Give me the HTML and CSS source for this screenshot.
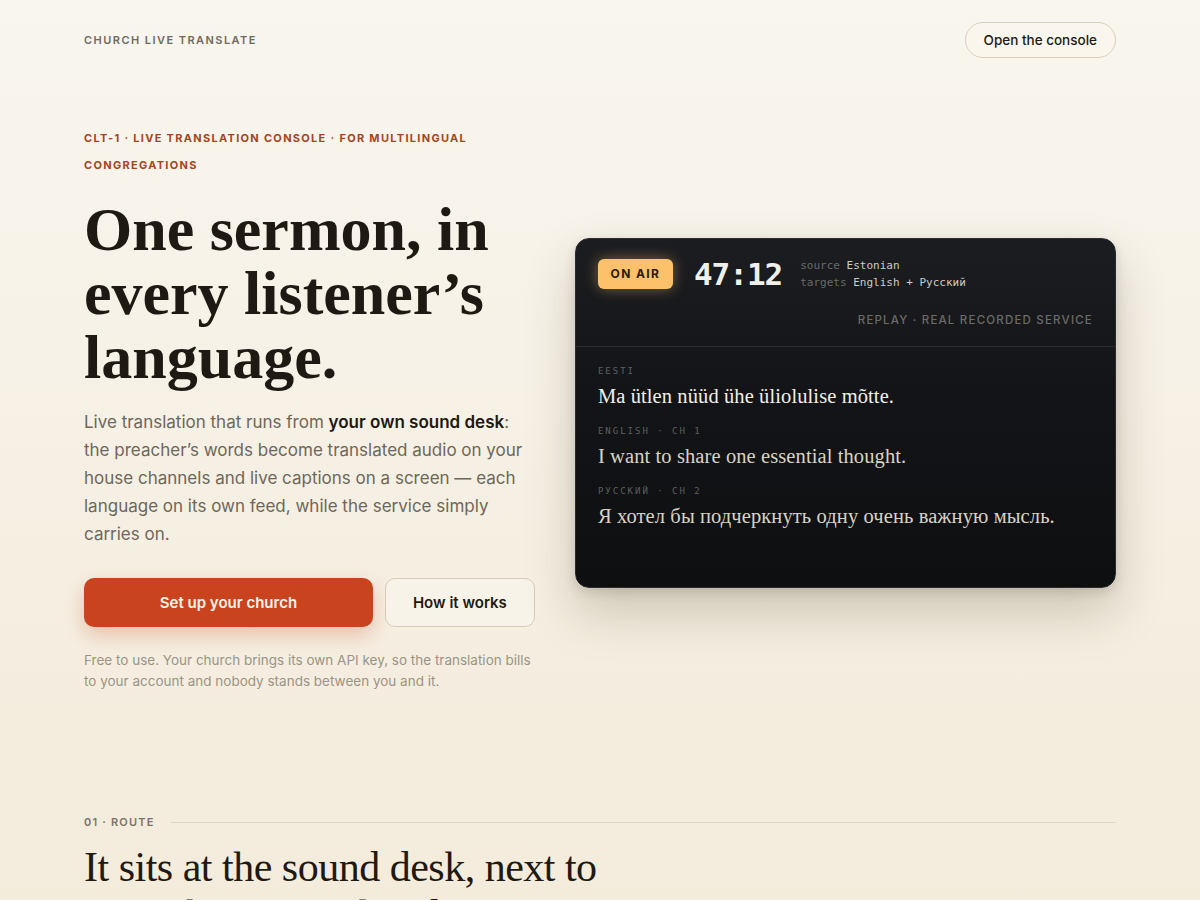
FILE: index.html
```html
<!DOCTYPE html>
<html lang="en">
<head>
<meta charset="utf-8">
<title>Church Live Translate</title>
<link rel="stylesheet" href="styles.css">
</head>
<body>
<div class="page">
  <header class="topbar">
    <div class="brand">CHURCH LIVE TRANSLATE</div>
    <a class="console-btn" href="#">Open the console</a>
  </header>

  <section class="hero">
    <div class="hero-copy">
      <p class="eyebrow">CLT-1 · LIVE TRANSLATION CONSOLE · FOR MULTILINGUAL CONGREGATIONS</p>
      <h1 class="headline">One sermon, in every listener’s language.</h1>
      <p class="lede">Live translation that runs from <strong>your own sound desk</strong>: the preacher’s words become translated audio on your house channels and live captions on a screen — each language on its own feed, while the service simply carries on.</p>
      <div class="actions">
        <a class="btn btn-primary" href="#">Set up your church</a>
        <a class="btn btn-ghost" href="#">How it works</a>
      </div>
      <p class="note">Free to use. Your church brings its own API key, so the translation bills to your account and nobody stands between you and it.</p>
    </div>

    <div class="console">
      <div class="console-head">
        <div class="console-row">
          <span class="onair">ON AIR</span>
          <span class="timer">47:12</span>
          <div class="meta">
            <div><span class="k">source</span> Estonian</div>
            <div><span class="k">targets</span> English + Русский</div>
          </div>
        </div>
        <div class="replay">REPLAY · REAL RECORDED SERVICE</div>
      </div>
      <div class="console-body">
        <div class="line">
          <div class="lang">EESTI</div>
          <div class="text src">Ma ütlen nüüd ühe üliolulise mõtte.</div>
        </div>
        <div class="line">
          <div class="lang">ENGLISH · CH 1</div>
          <div class="text">I want to share one essential thought.</div>
        </div>
        <div class="line">
          <div class="lang">РУССКИЙ · CH 2</div>
          <div class="text">Я хотел бы подчеркнуть одну очень важную мысль.</div>
        </div>
      </div>
    </div>
  </section>

  <section class="route">
    <div class="section-label"><span>01 · ROUTE</span><span class="rule"></span></div>
    <h2 class="section-title">It sits at the sound desk, next to everything you already run.</h2>
  </section>
</div>
</body>
</html>
```

FILE: styles.css
```css
* { box-sizing: border-box; }
html, body { margin: 0; padding: 0; }
body {
  background: linear-gradient(180deg, #f9f6ef 0%, #f6f0e4 50%, #f3ebda 100%);
  min-height: 900px;
  font-family: "Inter", "Liberation Sans", sans-serif;
  color: #1d1912;
  overflow: hidden;
}
a { text-decoration: none; color: inherit; }
.page { width: 1032px; margin: 0 auto; }

.topbar {
  display: flex; align-items: center; justify-content: space-between;
  height: 80px;
}
.brand {
  font-size: 11px; font-weight: 600; letter-spacing: 1.45px; color: #6e6a5f;
}
.console-btn {
  display: inline-flex; align-items: center; justify-content: center;
  height: 36px; padding: 0 18px; border: 1px solid #d9d0ba; border-radius: 18px;
  font-size: 13.5px; font-weight: 500; color: #1d1912; background: #faf6ee;
}

.hero {
  display: grid; grid-template-columns: 1fr 1.2fr; column-gap: 40px;
  align-items: center; padding-top: 45px;
}
.eyebrow {
  margin: 0; font-size: 11px; font-weight: 700; letter-spacing: 1.3px;
  line-height: 27px; color: #a4461c;
}
.headline {
  margin: 18px 0 0; font-family: "Liberation Serif", "DejaVu Serif", serif;
  font-weight: 700; font-size: 62px; line-height: 64px; letter-spacing: 0;
  color: #1e1a13;
}
.lede {
  margin: 19px 0 0; font-size: 17px; line-height: 28px; color: #6d675b;
}
.lede strong { color: #1d1912; font-weight: 600; }
.actions { display: flex; gap: 12px; margin-top: 30px; }
.btn {
  height: 49px; display: flex; align-items: center; justify-content: center;
  border-radius: 10px; font-size: 15px; font-weight: 600;
}
.btn-primary {
  flex: 1; background: #c9441e; color: #fff4ea;
  box-shadow: 0 8px 20px rgba(201, 68, 30, 0.28);
}
.btn-ghost {
  width: 150px; border: 1px solid #d6ccb6; color: #1d1912; background: #f8f3e8;
}
.note {
  margin: 23px 0 0; font-size: 13.5px; line-height: 21px; color: #9b9484;
}

.console {
  height: 350px; border-radius: 14px;
  background: linear-gradient(180deg, #1b1d20 0%, #131417 45%, #0e0f11 100%);
  border: 1px solid #2a2b2e;
  box-shadow: 0 24px 50px rgba(60, 45, 20, 0.22), 0 4px 12px rgba(0,0,0,0.12);
  overflow: hidden; margin-top: 8px;
}
.console-head {
  padding: 17px 22px 0; height: 108px; border-bottom: 1px solid #2a2b2e;
}
.console-row { display: flex; align-items: center; }
.onair {
  display: inline-flex; align-items: center; justify-content: center;
  width: 75px; height: 30px; border-radius: 6px; background: #fcc16a;
  color: #2a1a08; font-size: 12px; font-weight: 700; letter-spacing: 1.4px;
  box-shadow: 0 0 14px rgba(252, 193, 106, 0.45);
}
.timer {
  margin-left: 21px; font-family: "DejaVu Sans Mono", "Liberation Mono", monospace;
  font-size: 31px; font-weight: 600; color: #f1efea; letter-spacing: -1px;
}
.meta {
  margin-left: 18px; font-family: "DejaVu Sans Mono", "Liberation Mono", monospace;
  font-size: 11px; line-height: 17px; color: #cfccc4;
}
.meta .k { color: #6a6a68; }
.replay {
  margin-top: 21px; text-align: right; font-size: 11.5px; font-weight: 500;
  letter-spacing: 1.2px; color: #6c6b66;
}
.console-body { padding: 18px 22px 0; }
.line { height: 60px; }
.lang {
  font-family: "DejaVu Sans Mono", "Liberation Mono", monospace;
  font-size: 9px; letter-spacing: 2px; color: #5f5f5d; line-height: 12px;
}
.text {
  margin-top: 6px; font-family: "Liberation Serif", "DejaVu Serif", serif;
  font-size: 20.5px; line-height: 26px; color: #d9d3c5; letter-spacing: 0.1px;
}
.text.src { color: #f2efe8; }

.route { padding-top: 123px; }
.section-label {
  display: flex; align-items: center; gap: 16px;
  font-size: 11px; font-weight: 600; letter-spacing: 1.2px; color: #7a7466;
}
.rule { flex: 1; height: 1px; background: #e0d6c2; }
.section-title {
  margin: 14px 0 0; width: 560px; font-family: "Liberation Serif", "DejaVu Serif", serif;
  font-weight: 400; font-size: 42px; line-height: 48px; color: #1e1a13; letter-spacing: -0.5px;
}
```
